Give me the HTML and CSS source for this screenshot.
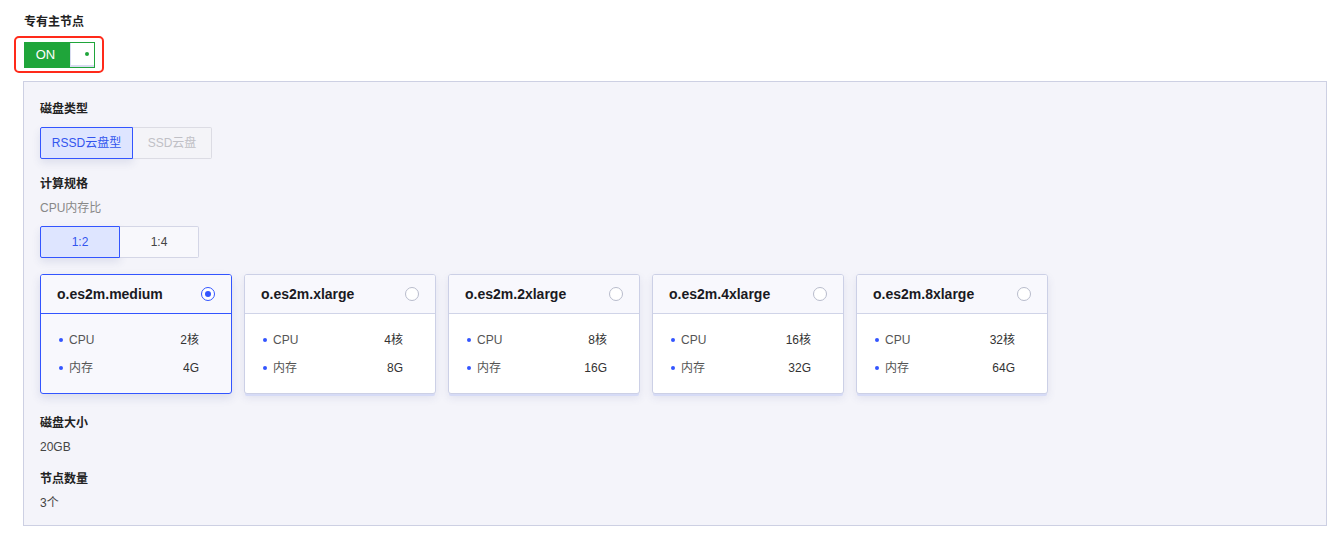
FILE: index.html
```html
<!DOCTYPE html>
<html lang="zh">
<head>
<meta charset="utf-8">
<link rel="stylesheet" href="styles.css">
</head>
<body>
<div class="page">
  <div class="title">专有主节点</div>
  <div class="toggle-wrap">
    <div class="toggle">
      <div class="toggle-on">ON</div>
      <div class="toggle-knob"><span class="dot"></span></div>
    </div>
  </div>
  <div class="panel">
    <div class="label">磁盘类型</div>
    <div class="seg seg-disk">
      <div class="seg-btn active">RSSD云盘型</div>
      <div class="seg-btn disabled">SSD云盘</div>
    </div>
    <div class="label">计算规格</div>
    <div class="sublabel">CPU内存比</div>
    <div class="seg seg-ratio">
      <div class="seg-btn active">1:2</div>
      <div class="seg-btn">1:4</div>
    </div>
    <div class="cards">
      <div class="card selected">
        <div class="card-head"><span class="card-title">o.es2m.medium</span><span class="radio on"></span></div>
        <div class="card-body">
          <div class="row"><span class="bullet"></span><span class="k">CPU</span><span class="v">2核</span></div>
          <div class="row"><span class="bullet"></span><span class="k">内存</span><span class="v">4G</span></div>
        </div>
      </div>
      <div class="card">
        <div class="card-head"><span class="card-title">o.es2m.xlarge</span><span class="radio"></span></div>
        <div class="card-body">
          <div class="row"><span class="bullet"></span><span class="k">CPU</span><span class="v">4核</span></div>
          <div class="row"><span class="bullet"></span><span class="k">内存</span><span class="v">8G</span></div>
        </div>
      </div>
      <div class="card">
        <div class="card-head"><span class="card-title">o.es2m.2xlarge</span><span class="radio"></span></div>
        <div class="card-body">
          <div class="row"><span class="bullet"></span><span class="k">CPU</span><span class="v">8核</span></div>
          <div class="row"><span class="bullet"></span><span class="k">内存</span><span class="v">16G</span></div>
        </div>
      </div>
      <div class="card">
        <div class="card-head"><span class="card-title">o.es2m.4xlarge</span><span class="radio"></span></div>
        <div class="card-body">
          <div class="row"><span class="bullet"></span><span class="k">CPU</span><span class="v">16核</span></div>
          <div class="row"><span class="bullet"></span><span class="k">内存</span><span class="v">32G</span></div>
        </div>
      </div>
      <div class="card">
        <div class="card-head"><span class="card-title">o.es2m.8xlarge</span><span class="radio"></span></div>
        <div class="card-body">
          <div class="row"><span class="bullet"></span><span class="k">CPU</span><span class="v">32核</span></div>
          <div class="row"><span class="bullet"></span><span class="k">内存</span><span class="v">64G</span></div>
        </div>
      </div>
    </div>
    <div class="label">磁盘大小</div>
    <div class="value">20GB</div>
    <div class="label label-gap">节点数量</div>
    <div class="value">3个</div>
  </div>
</div>
</body>
</html>
```

FILE: styles.css
```css
* { box-sizing: border-box; }
html, body { margin: 0; padding: 0; background: #fff; }
body {
  font-family: "Liberation Sans", Arial, "Noto Sans CJK SC", sans-serif;
  font-size: 12px;
  color: #333;
}
.page {
  padding: 14px 16px 0 23px;
}
.title {
  font-weight: bold;
  color: #222;
  line-height: 16px;
  padding-left: 1px;
}
.toggle-wrap {
  margin: 6px 0 8px -9px;
  width: 90px;
  height: 37px;
  border: 2px solid #ff2a1a;
  border-radius: 5px;
  padding: 4px 0 0 8px;
}
.toggle {
  display: flex;
  width: 71px;
  height: 26px;
  border: 1px solid #1fa53a;
  background: #1fa53a;
}
.toggle-on {
  width: 45px;
  color: #fff;
  font-size: 13px;
  line-height: 24px;
  text-align: center;
  padding-right: 4px;
}
.toggle-knob {
  flex: 1;
  background: #fff;
  border-bottom: 2px solid #d8dcf0;
  border-left: 1px solid #d8dcf0;
  display: flex;
  align-items: center;
  justify-content: flex-end;
  padding-right: 5px;
}
.dot {
  width: 4px;
  height: 4px;
  border-radius: 50%;
  background: #1fa53a;
}
.panel {
  width: 1304px;
  height: 445px;
  background: #f4f4fa;
  border: 1px solid #cdd0e3;
  padding: 19px 16px 0 16px;
}
.label {
  font-weight: bold;
  color: #222;
  line-height: 16px;
}
.sublabel {
  color: #888;
  line-height: 16px;
  margin-top: 8px;
}
.seg {
  display: flex;
  margin-top: 10px;
  margin-bottom: 17px;
}
.seg-ratio { margin-top: 10px; margin-bottom: 16px; }
.seg-btn {
  height: 32px;
  line-height: 30px;
  text-align: center;
  border: 1px solid #d4d6e6;
  background: #f8f8fc;
  color: #444;
  font-size: 12px;
}
.seg-disk .seg-btn { width: 93px; }
.seg-disk .seg-btn + .seg-btn { width: 79px; border-left: none; border-radius: 0 2px 2px 0; }
.seg-ratio .seg-btn { width: 80px; }
.seg-ratio .seg-btn + .seg-btn { width: 79px; border-left: none; border-radius: 0 2px 2px 0; }
.seg-btn.active {
  background: #dee5ff;
  border-color: #3355ff;
  color: #3355ee;
  border-radius: 2px 0 0 2px;
  box-shadow: 0 4px 8px rgba(60, 70, 140, 0.12);
}
.seg-btn.disabled {
  color: #c0c0c6;
  background: #f4f4f8;
  border-color: #dcdce4;
}
.cards {
  display: flex;
  gap: 12px;
  margin-bottom: 21px;
}
.card {
  width: 192px;
  height: 120px;
  border: 1px solid #ccd0e6;
  border-radius: 3px;
  background: #fff;
  box-shadow: 0 3px 0 -1px #d6dbf6, 0 4px 8px rgba(60, 70, 140, 0.10);
  overflow: hidden;
}
.card.selected {
  border-color: #3355ff;
  background: #f8f8fd;
  box-shadow: 0 4px 10px rgba(60, 70, 140, 0.14);
}
.card-head {
  height: 39px;
  background: #f8f8fd;
  border-bottom: 1px solid #d0d4e8;
  display: flex;
  align-items: center;
  justify-content: space-between;
  padding: 0 16px 0 16px;
}
.card.selected .card-head { border-bottom-color: #3355ff; }
.card-title {
  font-weight: bold;
  font-size: 14px;
  color: #1a1a22;
}
.radio {
  width: 14px;
  height: 14px;
  border-radius: 50%;
  border: 1px solid #b8bccc;
  background: #fff;
  position: relative;
}
.radio.on { border-color: #3355ff; }
.radio.on::after {
  content: "";
  position: absolute;
  left: 3px;
  top: 3px;
  width: 6px;
  height: 6px;
  border-radius: 50%;
  background: #3355ff;
}
.card-body {
  padding: 18px 32px 0 18px;
}
.row {
  display: flex;
  align-items: baseline;
  height: 16px;
  line-height: 16px;
  margin-bottom: 12px;
}
.bullet {
  width: 4px;
  height: 4px;
  border-radius: 50%;
  background: #3355ff;
  margin-right: 6px;
  align-self: center;
}
.k { color: #555; flex: 1; }
.v { color: #333; }
.value {
  color: #444;
  line-height: 16px;
  margin-top: 8px;
}
.label-gap { margin-top: 16px; }
```
